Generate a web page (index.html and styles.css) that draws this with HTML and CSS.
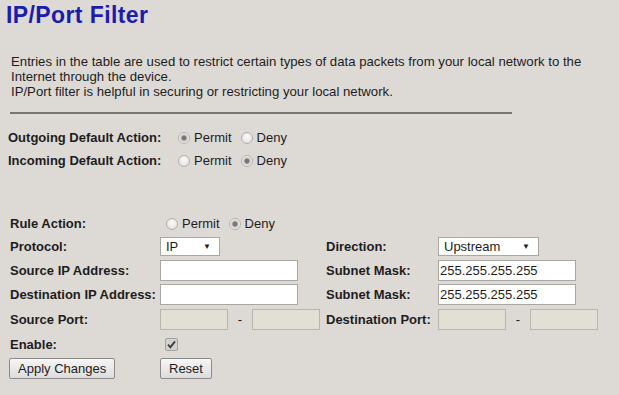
FILE: index.html
```html
<!DOCTYPE html>
<html>
<head>
  <title>IP/Port Filter</title>
  <meta name="viewport" content="width=device-width, initial-scale=1.0">
  <link rel="stylesheet" href="styles.css">
</head>
<body>
  <h1>IP/Port Filter</h1>
  <p class="intro">Entries in the table are used to restrict certain types of data packets from your local network to the Internet through the device.<br>IP/Port filter is helpful in securing or restricting your local network.</p>
  <hr class="rule">

  <div class="defaults">
    <div class="row">
      <span class="label">Outgoing Default Action:</span>
      <span class="choice">
        <input type="radio" name="out" checked><span>Permit</span>
        <input type="radio" name="out" class="second"><span>Deny</span>
      </span>
    </div>
    <div class="row">
      <span class="label">Incoming Default Action:</span>
      <span class="choice">
        <input type="radio" name="in"><span>Permit</span>
        <input type="radio" name="in" class="second" checked><span>Deny</span>
      </span>
    </div>
  </div>

  <form class="filter">
    <span class="label">Rule Action:</span>
    <span class="choice span3">
      <input type="radio" name="act"><span>Permit</span>
      <input type="radio" name="act" class="second" checked><span>Deny</span>
    </span>

    <span class="label">Protocol:</span>
    <span class="cell">
      <span class="select small"><span>IP</span><span class="arrow">&#9660;</span></span>
    </span>
    <span class="label">Direction:</span>
    <span class="cell">
      <span class="select wide"><span>Upstream</span><span class="arrow">&#9660;</span></span>
    </span>

    <span class="label">Source IP Address:</span>
    <span class="cell"><input type="text" class="field"></span>
    <span class="label">Subnet Mask:</span>
    <span class="cell"><input type="text" class="field" value="255.255.255.255"></span>

    <span class="label">Destination IP Address:</span>
    <span class="cell"><input type="text" class="field"></span>
    <span class="label">Subnet Mask:</span>
    <span class="cell"><input type="text" class="field" value="255.255.255.255"></span>

    <span class="label">Source Port:</span>
    <span class="cell"><input type="text" class="port" disabled><span class="dash">-</span><input type="text" class="port" disabled></span>
    <span class="label">Destination Port:</span>
    <span class="cell"><input type="text" class="port" disabled><span class="dash">-</span><input type="text" class="port" disabled></span>

    <span class="label">Enable:</span>
    <span class="cell span3">
      <span class="check"><svg width="9" height="9" viewBox="0 0 9 9"><path d="M1 4.6 L3.4 7.2 L8 1.4" fill="none" stroke="#404040" stroke-width="1.9"/></svg></span>
    </span>

    <span class="cell"><button type="button" class="btn apply">Apply Changes</button></span>
    <span class="cell span3"><button type="reset" class="btn">Reset</button></span>
  </form>
</body>
</html>
```

FILE: styles.css
```css
body {
  font-family: "Liberation Sans", Arial, sans-serif;
  font-size: 13px;
  color: #1e1c1c;
  background-color: #dddad6;
  margin: 0;
  padding: 0 7px;
}
h1 {
  color: #1c1cac;
  font-size: 23px;
  letter-spacing: 0.4px;
  line-height: 25px;
  margin: 3px 0 0 -1px;
}
.intro {
  font-size: 13.2px;
  line-height: 15px;
  margin: 26px 0 0 4px;
  width: 596px;
}
.rule {
  border: none;
  height: 2px;
  background-color: #7a7470;
  width: 502px;
  margin: 13px 0 0 3px;
}
.defaults {
  margin: 12px 0 0 1px;
}
.row {
  display: flex;
  align-items: center;
  height: 23px;
}
.row .label {
  width: 164px;
}
.label {
  font-weight: bold;
  white-space: nowrap;
}
.choice {
  display: flex;
  align-items: center;
}
.choice input[type="radio"] {
  appearance: none;
  -webkit-appearance: none;
  width: 12px;
  height: 12px;
  margin: 0 4px 0 6px;
  border: 1px solid #b3b0ad;
  border-radius: 50%;
  background: radial-gradient(circle at 50% 40%, #fbfbfb, #dedcda);
  box-sizing: border-box;
}
.choice input.second {
  margin-left: 9px;
}
.choice input[type="radio"]:checked {
  background: radial-gradient(circle, #6f6f6f 0, #7a7a7a 2px, #c9c7c5 3px, #f4f4f4 5px);
}
.filter {
  display: grid;
  grid-template-columns: 150px 166px 112px auto;
  grid-template-rows: 23px 23px 24px 25px 25px 24px 24px;
  align-items: center;
  margin: 40px 0 0 3px;
}
.span3 {
  grid-column: span 3;
}
.cell {
  display: flex;
  align-items: center;
}
.select {
  display: flex;
  justify-content: space-between;
  align-items: center;
  height: 19px;
  box-sizing: border-box;
  border: 1px solid #a9a7a4;
  background-color: #fff;
  padding: 0 8px 0 5px;
}
.select.small {
  width: 60px;
}
.select.wide {
  width: 101px;
}
.arrow {
  font-size: 8px;
}
.field, .port {
  height: 21px;
  box-sizing: border-box;
  border: 1px solid #a9a7a4;
  background-color: #fff;
  font-family: "Liberation Sans", Arial, sans-serif;
  font-size: 13px;
  color: #1e1c1c;
  padding: 0 1px;
  margin: 0;
}
.field {
  width: 138px;
}
.port {
  width: 68px;
  background-color: #e2dfd5;
  border-color: #b9b6af;
}
.dash {
  width: 24px;
  text-align: center;
}
.check {
  display: flex;
  align-items: center;
  justify-content: center;
  width: 11px;
  height: 11px;
  margin-left: 5px;
  border: 1px solid #a4a2a0;
  border-radius: 2px;
  background-color: #d4d2cf;
}
.btn {
  height: 21px;
  padding: 0 8px;
  border: 1px solid #8c8a88;
  border-radius: 2px;
  background: linear-gradient(#f6f6f6, #dcdcdc);
  font-family: "Liberation Sans", Arial, sans-serif;
  font-size: 13px;
  color: #1e1c1c;
}
.btn.apply {
  margin-left: -1px;
}
```
